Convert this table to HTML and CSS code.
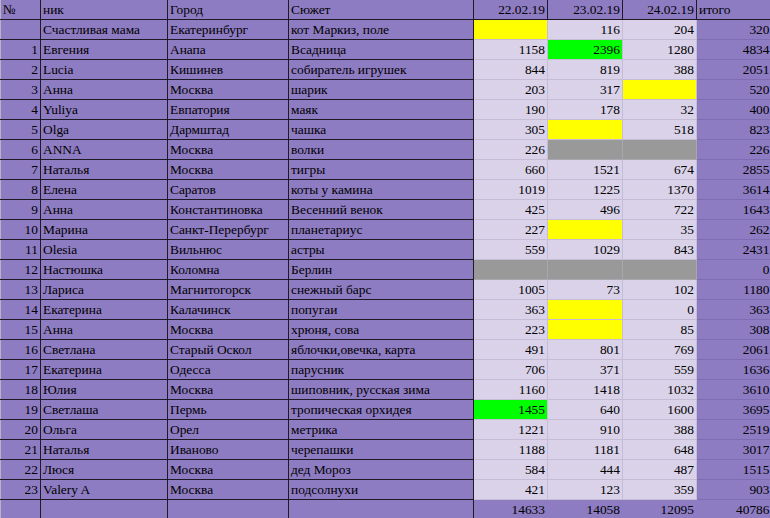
FILE: index.html
```html
<!DOCTYPE html>
<html lang="ru">
<head>
<meta charset="utf-8">
<title>Таблица</title>
<link rel="stylesheet" href="styles.css">
</head>
<body>
<table class="sheet">
<colgroup>
<col class="c-num"><col class="c-nick"><col class="c-city"><col class="c-plot"><col class="c-d1"><col class="c-d2"><col class="c-d3"><col class="c-tot">
</colgroup>
<thead>
<tr class="head">
<th class="t">№</th><th class="t">ник</th><th class="t">Город</th><th class="t">Сюжет</th><th class="hd">22.02.19</th><th class="hd">23.02.19</th><th class="hd">24.02.19</th><th class="ht">итого</th>
</tr>
</thead>
<tbody>
<tr><td class="n"></td><td class="t">Счастливая мама</td><td class="t">Екатеринбург</td><td class="t">кот Маркиз, поле</td><td class="d y"></td><td class="d">116</td><td class="d">204</td><td class="s">320</td></tr>
<tr><td class="n">1</td><td class="t">Евгения</td><td class="t">Анапа</td><td class="t">Всадница</td><td class="d">1158</td><td class="d g">2396</td><td class="d">1280</td><td class="s">4834</td></tr>
<tr><td class="n">2</td><td class="t">Lucia</td><td class="t">Кишинев</td><td class="t">собиратель игрушек</td><td class="d">844</td><td class="d">819</td><td class="d">388</td><td class="s">2051</td></tr>
<tr><td class="n">3</td><td class="t">Анна</td><td class="t">Москва</td><td class="t">шарик</td><td class="d">203</td><td class="d">317</td><td class="d y"></td><td class="s">520</td></tr>
<tr><td class="n">4</td><td class="t">Yuliya</td><td class="t">Евпатория</td><td class="t">маяк</td><td class="d">190</td><td class="d">178</td><td class="d">32</td><td class="s">400</td></tr>
<tr><td class="n">5</td><td class="t">Olga</td><td class="t">Дармштад</td><td class="t">чашка</td><td class="d">305</td><td class="d y"></td><td class="d">518</td><td class="s">823</td></tr>
<tr><td class="n">6</td><td class="t">ANNA</td><td class="t">Москва</td><td class="t">волки</td><td class="d">226</td><td class="d x"></td><td class="d x"></td><td class="s">226</td></tr>
<tr><td class="n">7</td><td class="t">Наталья</td><td class="t">Москва</td><td class="t">тигры</td><td class="d">660</td><td class="d">1521</td><td class="d">674</td><td class="s">2855</td></tr>
<tr><td class="n">8</td><td class="t">Елена</td><td class="t">Саратов</td><td class="t">коты у камина</td><td class="d">1019</td><td class="d">1225</td><td class="d">1370</td><td class="s">3614</td></tr>
<tr><td class="n">9</td><td class="t">Анна</td><td class="t">Константиновка</td><td class="t">Весенний венок</td><td class="d">425</td><td class="d">496</td><td class="d">722</td><td class="s">1643</td></tr>
<tr><td class="n">10</td><td class="t">Марина</td><td class="t">Санкт-Перербург</td><td class="t">планетариус</td><td class="d">227</td><td class="d y"></td><td class="d">35</td><td class="s">262</td></tr>
<tr><td class="n">11</td><td class="t">Olesia</td><td class="t">Вильнюс</td><td class="t">астры</td><td class="d">559</td><td class="d">1029</td><td class="d">843</td><td class="s">2431</td></tr>
<tr><td class="n">12</td><td class="t">Настюшка</td><td class="t">Коломна</td><td class="t">Берлин</td><td class="d x"></td><td class="d x"></td><td class="d x"></td><td class="s">0</td></tr>
<tr><td class="n">13</td><td class="t">Лариса</td><td class="t">Магнитогорск</td><td class="t">снежный барс</td><td class="d">1005</td><td class="d">73</td><td class="d">102</td><td class="s">1180</td></tr>
<tr><td class="n">14</td><td class="t">Екатерина</td><td class="t">Калачинск</td><td class="t">попугаи</td><td class="d">363</td><td class="d y"></td><td class="d">0</td><td class="s">363</td></tr>
<tr><td class="n">15</td><td class="t">Анна</td><td class="t">Москва</td><td class="t">хрюня, сова</td><td class="d">223</td><td class="d y"></td><td class="d">85</td><td class="s">308</td></tr>
<tr><td class="n">16</td><td class="t">Светлана</td><td class="t">Старый Оскол</td><td class="t">яблочки,овечка, карта</td><td class="d">491</td><td class="d">801</td><td class="d">769</td><td class="s">2061</td></tr>
<tr><td class="n">17</td><td class="t">Екатерина</td><td class="t">Одесса</td><td class="t">парусник</td><td class="d">706</td><td class="d">371</td><td class="d">559</td><td class="s">1636</td></tr>
<tr><td class="n">18</td><td class="t">Юлия</td><td class="t">Москва</td><td class="t">шиповник, русская зима</td><td class="d">1160</td><td class="d">1418</td><td class="d">1032</td><td class="s">3610</td></tr>
<tr><td class="n">19</td><td class="t">Светлаша</td><td class="t">Пермь</td><td class="t">тропическая орхидея</td><td class="d g">1455</td><td class="d">640</td><td class="d">1600</td><td class="s">3695</td></tr>
<tr><td class="n">20</td><td class="t">Ольга</td><td class="t">Орел</td><td class="t">метрика</td><td class="d">1221</td><td class="d">910</td><td class="d">388</td><td class="s">2519</td></tr>
<tr><td class="n">21</td><td class="t">Наталья</td><td class="t">Иваново</td><td class="t">черепашки</td><td class="d">1188</td><td class="d">1181</td><td class="d">648</td><td class="s">3017</td></tr>
<tr><td class="n">22</td><td class="t">Люся</td><td class="t">Москва</td><td class="t">дед Мороз</td><td class="d">584</td><td class="d">444</td><td class="d">487</td><td class="s">1515</td></tr>
<tr><td class="n">23</td><td class="t">Valery A</td><td class="t">Москва</td><td class="t">подсолнухи</td><td class="d">421</td><td class="d">123</td><td class="d">359</td><td class="s">903</td></tr>
<tr class="foot"><td class="n"></td><td class="t"></td><td class="t"></td><td class="t"></td><td class="f">14633</td><td class="f">14058</td><td class="f">12095</td><td class="s">40786</td></tr>
</tbody>
</table>
</body>
</html>
```
FILE: styles.css
```css
html, body {
  margin: 0;
  padding: 0;
  background: #ffffff;
}

.sheet {
  border-collapse: collapse;
  table-layout: fixed;
  width: 771px;
  font-family: "Liberation Serif", "Times New Roman", serif;
  font-size: 13.4px;
  color: #000000;
  background: #8e7cc3;
}

.c-num { width: 40px; }
.c-nick { width: 127px; }
.c-city { width: 121px; }
.c-plot { width: 185px; }
.c-d1 { width: 74px; }
.c-d2 { width: 75px; }
.c-d3 { width: 74px; }
.c-tot { width: 75px; }

.sheet th,
.sheet td {
  height: 19px;
  padding: 0 2px;
  line-height: 19px;
  font-weight: normal;
  white-space: nowrap;
  overflow: hidden;
  vertical-align: middle;
}

.sheet tr:first-child th { border-top: 0; }

.t {
  text-align: left;
  border: 1px solid #1e1a26;
}
.sheet th.t:first-child,
.sheet td.n {
  border-left: 1px solid #b9b3c6;
}

.n {
  text-align: right;
  border: 1px solid #1e1a26;
}

.hd {
  text-align: right;
  border: 1px solid #1e1a26;
}

.ht {
  text-align: left;
  border: 1px solid #1e1a26;
  border-right: 0;
}

.d {
  text-align: right;
  background: #d9d2e9;
  border: 1px solid #c4bdd5;
}

.d.y { background: #ffff00; }
.d.g { background: #00ff00; }
.d.x { background: #999999; border-color: #a9a6ae; }

.s {
  text-align: right;
  border: 1px solid #7e6db5;
  border-right: 0;
}

.f {
  text-align: right;
  border: 1px solid #8e7cc3;
}

.foot .s { border-bottom: 1px solid #9b9b9b; }
```
